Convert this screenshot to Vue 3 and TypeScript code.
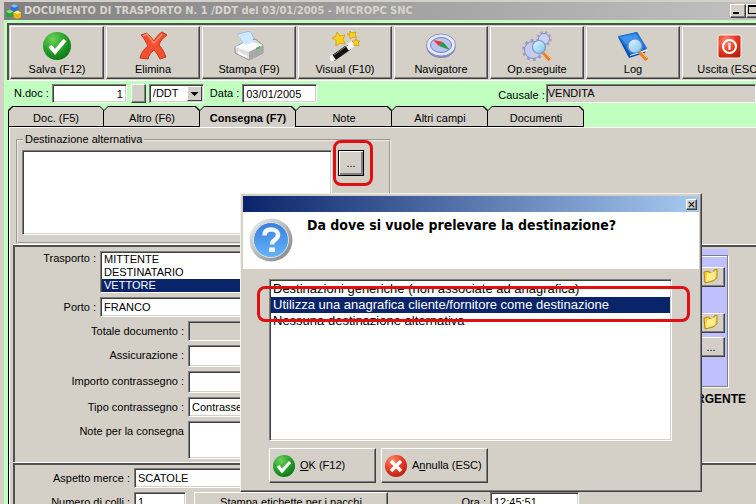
<script setup lang="ts">
import { ref } from 'vue'

interface Tool {
  icon: string
  label: string
}

const tools: Tool[] = [
  { icon: 'ok', label: 'Salva (F12)' },
  { icon: 'delete', label: 'Elimina' },
  { icon: 'print', label: 'Stampa (F9)' },
  { icon: 'wand', label: 'Visual (F10)' },
  { icon: 'compass', label: 'Navigatore' },
  { icon: 'gears', label: 'Op.eseguite' },
  { icon: 'log', label: 'Log' },
  { icon: 'exit', label: 'Uscita (ESC)' },
]

const tabs: string[] = ['Doc. (F5)', 'Altro (F6)', 'Consegna (F7)', 'Note', 'Altri campi', 'Documenti']
const activeTab = ref('Consegna (F7)')

const carriers: string[] = ['MITTENTE', 'DESTINATARIO', 'VETTORE']
const carrier = ref('VETTORE')

const sources: string[] = [
  'Destinazioni generiche (non associate ad anagrafica)',
  'Utilizza una anagrafica cliente/fornitore come destinazione',
  'Nessuna destinazione alternativa',
]
const source = ref(sources[1])

const docNumber = ref('1')
const docDate = ref('03/01/2005')
const reason = ref('VENDITA')
const port = ref('FRANCO')
const goodsLook = ref('SCATOLE')
const parcels = ref('1')
const time = ref('12:45:51')
</script>

<template>
  <div class="window">
    <!-- shared gradients -->
    <svg class="defs" aria-hidden="true">
      <defs>
        <radialGradient id="gGreen" cx="35%" cy="25%" r="80%">
          <stop offset="0" stop-color="#6fd05a" /><stop offset=".55" stop-color="#27a22b" /><stop offset="1" stop-color="#0d7418" />
        </radialGradient>
        <radialGradient id="gRed" cx="35%" cy="25%" r="80%">
          <stop offset="0" stop-color="#ff8a70" /><stop offset=".55" stop-color="#e83a22" /><stop offset="1" stop-color="#b8200f" />
        </radialGradient>
        <linearGradient id="gBlue" x1="0" y1="0" x2="0" y2="1">
          <stop offset="0" stop-color="#3a7fdc" /><stop offset="1" stop-color="#62b4fb" />
        </linearGradient>
        <linearGradient id="gSteel" x1="0" y1="0" x2="1" y2="1">
          <stop offset="0" stop-color="#f4f4f2" /><stop offset="1" stop-color="#7d7d7d" />
        </linearGradient>
        <linearGradient id="gLens" x1="0" y1="0" x2="1" y2="1">
          <stop offset="0" stop-color="#e6f7ff" /><stop offset="1" stop-color="#7cc0e8" />
        </linearGradient>
      </defs>
    </svg>

    <header class="titlebar">
      <svg class="app-icon" viewBox="0 0 16 16" aria-hidden="true">
        <path d="M5 2l4-2 4 2v5l-4 2-4-2z" fill="#2f6fd6" /><path d="M5 2l4-2 4 2-4 2z" fill="#8dbcf7" />
        <path d="M0 8l4-2 4 2v5l-4 2-4-2z" fill="#2fa33a" /><path d="M0 8l4-2 4 2-4 2z" fill="#8be07c" />
        <path d="M8 9l4-2 4 2v5l-4 2-4-2z" fill="#e8b60c" /><path d="M8 9l4-2 4 2-4 2z" fill="#ffe873" />
      </svg>
      <h1>DOCUMENTO DI TRASPORTO N. 1 /DDT del 03/01/2005 - MICROPC SNC</h1>
      <div class="caption-buttons">
        <button class="cap" aria-label="Riduci"><svg viewBox="0 0 12 10"><path d="M2 7h6v2H2z" /></svg></button>
        <button class="cap" aria-label="Ingrandisci"><svg viewBox="0 0 12 10"><path d="M1 0h9v9H1zM2 2v6h7V2z" fill-rule="evenodd" /></svg></button>
      </div>
    </header>

    <main class="client">
      <nav class="toolbar">
        <button v-for="t in tools" :key="t.label" class="tool">
          <svg v-if="t.icon === 'ok'" viewBox="0 0 30 30">
            <circle cx="15" cy="15" r="14" fill="url(#gGreen)" /><path d="M8 15l5 6 10-12" fill="none" stroke="#fff" stroke-width="4" />
          </svg>
          <svg v-else-if="t.icon === 'delete'" viewBox="0 0 30 30">
            <path d="M3 4l6-2c2 2 5 5 7 8 2-4 5-7 8-9l5 3c-4 3-7 6-8 10 3 3 5 7 7 12l-6 2c-2-4-4-7-6-9-3 2-5 5-6 9l-8-1c1-5 4-9 8-12-2-4-4-8-7-11z" fill="#f2502e" stroke="#cf3316" stroke-width="1" />
            <path d="M5 5l4-2 7 9 8-9" fill="none" stroke="#ff8c6c" stroke-width="1.5" />
          </svg>
          <svg v-else-if="t.icon === 'print'" viewBox="0 0 30 30">
            <path d="M4 3l12-3 6 11-11 4z" fill="#d6ecff" stroke="#8cb4dc" stroke-width=".8" />
            <path d="M1 16l8-4 12-4 8 6v8l-14 7-14-7z" fill="#dcdcdc" stroke="#808080" stroke-width=".8" />
            <path d="M1 16l13-6 15 4-14 7z" fill="#fafafa" /><path d="M4 4l11-3 5 10-9 3z" fill="#cfe8ff" />
            <path d="M15 21l14-7v8l-14 7z" fill="#a8a8a8" />
            <path d="M4 20l9 5v2l-9-4z" fill="#fff" /><path d="M22 17l4-2v2l-4 2z" fill="#45b84a" />
          </svg>
          <svg v-else-if="t.icon === 'wand'" viewBox="0 0 30 30">
            <path d="M2 28l17-12" stroke="#111" stroke-width="6" /><path d="M0 29l4-3M17 17l7-5" stroke="#f4f4f4" stroke-width="6" />
            <path d="M4 24l14-10" stroke="#777" stroke-width="1" />
            <path d="M7 1l3 4 5-1-2 4 2 5-5-1-4 3V9L2 7l4-2zM20 0l2 2 4-1-1 3 2 3-4-1-3 2v-3l-3-2h3zM26 8l1 2h3l-2 2 1 3-3-1-2 1v-3l-2-2h3z" fill="#ffd21f" stroke="#d49a00" stroke-width=".8" />
          </svg>
          <svg v-else-if="t.icon === 'compass'" viewBox="0 0 30 30">
            <ellipse cx="15" cy="16" rx="14.5" ry="11" fill="#8088b8" /><ellipse cx="15" cy="14" rx="14.5" ry="11" fill="#e6e8fc" stroke="#8c94c4" />
            <ellipse cx="15" cy="14" rx="10.5" ry="7.5" fill="#b9c4f0" stroke="#7580b4" />
            <path d="M7 9l10 2-4 4z" fill="#e03a34" /><path d="M24 19l-11-4 4-4z" fill="#259c4a" />
          </svg>
          <svg v-else-if="t.icon === 'gears'" viewBox="0 0 30 30">
            <circle cx="11" cy="19" r="9.5" fill="none" stroke="#9a9fd0" stroke-width="3" stroke-dasharray="3 3" />
            <circle cx="11" cy="19" r="8.5" fill="#c6caec" stroke="#8a90c4" stroke-width="1" />
            <circle cx="22" cy="8" r="6.5" fill="none" stroke="#9a9fd0" stroke-width="2.4" stroke-dasharray="2.2 2.2" />
            <circle cx="22" cy="8" r="5.5" fill="#ced2f2" stroke="#8a90c4" stroke-width="1" />
            <path d="M21 21l7 8" stroke="#f08028" stroke-width="4" /><path d="M22 20l7 8" stroke="#ffe0b0" stroke-width="1" />
            <circle cx="17" cy="16" r="6.5" fill="url(#gLens)" stroke="#6f9fc8" stroke-width="1.2" />
          </svg>
          <svg v-else-if="t.icon === 'log'" viewBox="0 0 30 30">
            <path d="M0 6l19-5 10 17-2 4-16 5z" fill="#0c4fae" /><path d="M0 5l19-4 10 16-17 6z" fill="#2274d8" />
            <path d="M2 6l16-3 4 6-14 4z" fill="#3f93ee" />
            <path d="M12 24l17-6v2l-17 5z" fill="#e8f2ff" />
            <path d="M21 20l8 9" stroke="#f08028" stroke-width="4" /><path d="M22 19l7 8" stroke="#ffe0b0" stroke-width="1" />
            <circle cx="17" cy="15" r="7" fill="url(#gLens)" stroke="#5b95cc" stroke-width="1.2" />
          </svg>
          <svg v-else viewBox="0 0 30 30">
            <rect x="4" y="4" width="23" height="23" rx="2" fill="url(#gRed)" stroke="#fff0e8" stroke-width="1" />
            <circle cx="15.500" cy="15.500" r="6.500" fill="none" stroke="#fff" stroke-width="2.200" /><path d="M15.500 12v7" stroke="#fff" stroke-width="2.200" />
          </svg>
          <span>{{ t.label }}</span>
        </button>
      </nav>

      <section class="docbar">
        <label for="ndoc">N.doc :</label>
        <input id="ndoc" v-model="docNumber" class="sunk num" />
        <button class="raised blank" aria-label="Cerca documento"></button>
        <span class="combo">
          <select class="sunk" aria-label="Serie"><option>/DDT</option></select>
          <svg class="arrow" viewBox="0 0 16 16" aria-hidden="true"><path d="M3 6h10l-5 5z" /></svg>
        </span>
        <label for="data" class="data-label">Data :</label>
        <input id="data" v-model="docDate" class="sunk date" />
        <label for="causale" class="reason-label">Causale :</label>
        <input id="causale" v-model="reason" class="sunk reason" readonly />
      </section>

      <div class="tabs" role="tablist">
        <button
          v-for="t in tabs" :key="t" class="tab" :class="{ active: t === activeTab }"
          role="tab" :aria-selected="t === activeTab" @click="activeTab = t"
        >{{ t }}</button>
      </div>

      <div class="page">
        <fieldset class="dest">
          <legend>Destinazione alternativa</legend>
          <div class="dest-body">
            <textarea class="sunk" aria-label="Destinazione alternativa"></textarea>
            <span class="marked"><button class="raised dots">...</button></span>
          </div>
        </fieldset>

        <section class="panel delivery">
          <div class="fields">
            <div class="row short top">
              <label for="trasp">Trasporto :</label>
              <select id="trasp" v-model="carrier" class="sunk list" size="3">
                <option v-for="c in carriers" :key="c">{{ c }}</option>
              </select>
            </div>
            <div class="row short"><label for="porto">Porto :</label><input id="porto" v-model="port" class="sunk" /></div>
            <div class="row"><label for="tot">Totale documento :</label><input id="tot" class="sunk gray" readonly /></div>
            <div class="row tall"><label for="assic">Assicurazione :</label><input id="assic" class="sunk" /></div>
            <div class="row tall"><label for="imp">Importo contrassegno :</label><input id="imp" class="sunk" /></div>
            <div class="row">
              <label for="tipo">Tipo contrassegno :</label>
              <select id="tipo" class="sunk"><option>Contrassegno</option></select>
            </div>
            <div class="row notes"><label for="note">Note per la consegna</label><textarea id="note" class="sunk"></textarea></div>
          </div>
          <div class="side">
            <div class="lilac">
              <div class="lilac-frame">
                <button v-for="n in 2" :key="n" class="raised folder" :aria-label="'Apri archivio ' + n">
                  <svg viewBox="0 0 16 16"><path d="M1 4l5-1 1 2 4-1V2l3-1v9l-4 3-8 2z" fill="#f7cf3c" stroke="#b58a10" /><path d="M4 6l9-3-1 8-9 3z" fill="#ffee8c" /></svg>
                </button>
                <button class="raised more">...</button>
              </div>
            </div>
            <strong>URGENTE</strong>
          </div>
        </section>

        <section class="panel goods">
          <div class="row"><label for="aspetto">Aspetto merce :</label><input id="aspetto" v-model="goodsLook" class="sunk" /></div>
          <div class="row">
            <label for="colli">Numero di colli :</label><input id="colli" v-model="parcels" class="sunk parcels" />
            <button class="raised stamp">Stampa etichette per i pacchi</button>
            <label for="ora" class="time-label">Ora :</label><input id="ora" v-model="time" class="sunk time" />
          </div>
        </section>
      </div>
    </main>

    <div class="dialog" role="dialog" aria-labelledby="question">
      <div class="dialog-caption">
        <button class="cap close" aria-label="Chiudi"><svg viewBox="0 0 8 8"><path d="M1 1l6 6M7 1L1 7" stroke="#000" stroke-width="1.2" /></svg></button>
      </div>
      <div class="dialog-head">
        <svg viewBox="0 0 44 44" aria-hidden="true">
          <circle cx="22" cy="22" r="21.5" fill="url(#gSteel)" /><circle cx="22" cy="22" r="17.5" fill="url(#gBlue)" stroke="#d9e4f0" stroke-width="1" />
          <path d="M15.500 17.500c0-4.500 3-6 6.500-6s7 2 7 5.500c0 5-6 4.500-6 9.500" fill="none" stroke="#f3f6ff" stroke-width="4.500" />
          <path d="M20 29.500h6v4.500h-6z" fill="#f3f6ff" />
        </svg>
        <h2 id="question">Da dove si vuole prelevare la destinazione?</h2>
      </div>
      <div class="dialog-body">
        <select v-model="source" class="sunk list sources" size="10" aria-labelledby="question">
          <option v-for="s in sources" :key="s">{{ s }}</option>
        </select>
        <div class="actions">
          <button class="raised act">
            <svg viewBox="0 0 22 22"><circle cx="11" cy="11" r="11" fill="url(#gGreen)" /><path d="M5 11l4 5 8-9" fill="none" stroke="#fff" stroke-width="3.200" /></svg>
            <span><u>O</u>K (F12)</span>
          </button>
          <button class="raised act">
            <svg viewBox="0 0 22 22"><circle cx="11" cy="11" r="11" fill="url(#gRed)" /><path d="M6 6l10 10M16 6L6 16" fill="none" stroke="#fff" stroke-width="3.600" /></svg>
            <span>A<u>n</u>nulla (ESC)</span>
          </button>
        </div>
      </div>
      <div class="choice-mark"></div>
    </div>
  </div>
</template>

<style>
body {
  margin: 0;
  background: #d4d0c8;
}
</style>

<style scoped>
* {
  box-sizing: border-box;
}

.window {
  position: relative;
  display: flex;
  flex-direction: column;
  height: 100vh;
  overflow: hidden;
  padding: 2px 0 0 4px;
  background: #d4d0c8;
  font: 11px/13px 'Liberation Sans', Arial, sans-serif;
  color: #000;
}

.defs {
  position: absolute;
  width: 0;
  height: 0;
}

button,
input,
select,
textarea {
  margin: 0;
  font: inherit;
  color: inherit;
  border-radius: 0;
  outline: 0;
  resize: none;
  appearance: none;
}

h1,
h2 {
  margin: 0;
  font-family: 'DejaVu Sans Condensed', 'DejaVu Sans', Tahoma, sans-serif;
  font-weight: bold;
}

.sunk {
  padding: 1px 3px;
  background: #fff;
  border: 1px solid;
  border-color: #808080 #fff #fff #808080;
  box-shadow: inset 1px 1px #404040, inset -1px -1px #d4d0c8;
}

.raised,
.cap,
.tool {
  padding: 0;
  background: #d4d0c8;
  border: 1px solid;
  border-color: #fff #404040 #404040 #fff;
  box-shadow: inset -1px -1px #808080;
}

/* title bar */
.titlebar {
  display: flex;
  align-items: center;
  flex: none;
  height: 18px;
  padding-left: 2px;
  background: linear-gradient(90deg, #808080, #c0c0c0);
}

.app-icon {
  flex: none;
  width: 15px;
  height: 15px;
  margin-right: 3px;
}

.titlebar h1 {
  flex: 1;
  min-width: 0;
  font-size: 11px;
  line-height: 16px;
  color: #d8d5ce;
  white-space: nowrap;
}

.caption-buttons {
  display: flex;
  flex: none;
  margin-right: -6px;
}

.cap {
  display: flex;
  width: 16px;
  height: 14px;
}

.cap svg {
  width: 12px;
  height: 10px;
}

/* client area */
.client {
  flex: 1;
  display: flex;
  flex-direction: column;
  padding: 3px 0 0 3px;
  background: #c0ffc0;
}

.toolbar {
  display: flex;
  gap: 2px;
  flex: none;
  height: 58px;
  padding: 3px 0 1px 3px;
  border: solid #fff;
  border-width: 0 0 1px;
  background: #d4d0c8;
  box-shadow: inset 2px 2px #505050;
}

.tool {
  display: flex;
  flex-direction: column;
  align-items: center;
  flex: none;
  width: 94px;
  padding-top: 4px;
}

.tool svg {
  width: 30px;
  height: 30px;
}

.tool span {
  line-height: 16px;
}

.docbar {
  display: flex;
  align-items: center;
  flex: none;
  height: 25px;
  padding-left: 7px;
}

.docbar .sunk {
  height: 19px;
}

.docbar label {
  white-space: nowrap;
}

.docbar .num {
  width: 75px;
  margin-left: 3px;
  text-align: right;
}

.blank {
  width: 15px;
  height: 19px;
  margin: 0 3px 0 4px;
}

.combo {
  display: flex;
  position: relative;
}

.combo select {
  width: 55px;
}

.arrow {
  position: absolute;
  right: 2px;
  top: 2px;
  width: 15px;
  height: 15px;
  background: #d4d0c8;
  border: 1px solid;
  border-color: #fff #404040 #404040 #fff;
}

.data-label {
  margin: 0 3px 0 6px;
}

.docbar .date {
  width: 75px;
}

.reason-label {
  margin: 3px 1px 0 181px;
}

.docbar .reason {
  flex: 1;
  min-width: 0;
  padding: 0 1px 1px;
  background: #d4d0c8;
}

/* tabs */
.tabs {
  display: flex;
  flex: none;
  margin-left: 1px;
}

.tab {
  position: relative;
  z-index: 0;
  width: 96px;
  height: 21px;
  padding: 3px 0 0;
  border: 0;
  background: #000;
  clip-path: polygon(0 4px, 4px 0, 92px 0, 96px 4px, 96px 100%, 0 100%);
}

.tab::before {
  content: '';
  position: absolute;
  z-index: -1;
  inset: 1px 1px 1px 0;
  background: #d4d0c8;
  clip-path: polygon(0 4px, 4px 0, 91px 0, 95px 4px, 95px 100%, 0 100%);
}

.tab:first-child::before {
  left: 1px;
}

.tab.active {
  font-weight: bold;
}

.tab.active::before {
  bottom: 0;
}

.page {
  flex: 1;
  margin-left: 1px;
  padding: 6px 0 0 4px;
  background: #d4d0c8;
  border: solid #000;
  border-width: 0 0 0 1px;
  box-shadow: inset 1px 1px #fff;
}

.dest {
  width: 375px;
  margin: 0 0 1px 3px;
  padding: 4px 4px 7px 4px;
  border: 2px groove #eceae6;
}

.dest legend {
  margin-left: 1px;
  padding: 0 2px;
}

.dest-body {
  display: flex;
  gap: 6px;
}

.dest-body textarea {
  width: 310px;
  height: 85px;
}

.marked {
  position: relative;
  height: 26px;
}

.marked::after {
  content: '';
  position: absolute;
  inset: -10px -9px -10px -5px;
  border: 3px solid #e01010;
  border-radius: 8px;
}

.dots {
  width: 26px;
  height: 26px;
  border-color: #000;
  box-shadow: inset 1px 1px #fff, inset -2px -2px #808080;
}

/* panels */
.panel {
  border: solid #505050;
  border-width: 2px 0 0 2px;
  box-shadow: 0 -1px #fff;
}

.delivery {
  display: flex;
  justify-content: space-between;
  padding: 4px 0;
}

.fields {
  display: flex;
  flex-direction: column;
  gap: 4px;
}

.row {
  display: flex;
  gap: 4px;
}

.fields .row label {
  width: 169px;
  padding-top: 4px;
  text-align: right;
  white-space: nowrap;
}

.fields .short label {
  width: 81px;
}

.fields .top label {
  padding-top: 1px;
}

.fields .row .sunk {
  width: 140px;
  height: 20px;
}

.fields .short .sunk {
  width: 228px;
}

.fields .tall .sunk {
  height: 22px;
}

.fields .notes .sunk {
  height: 38px;
}

.fields .row .gray {
  background: #d4d0c8;
}

.fields .row .list {
  height: 42px;
  padding: 1px 1px 0;
}

.list {
  overflow: hidden;
}

.list option {
  min-height: 0;
  height: 13px;
  padding: 0 2px;
  line-height: 13px;
  color: #000;
}

.list option:checked {
  background: #0a246a linear-gradient(#0a246a, #0a246a);
  color: #fff;
}

.side {
  display: flex;
  flex-direction: column;
  align-items: flex-end;
  padding-right: 10px;
}

.side strong {
  margin-top: 5px;
  font-size: 12px;
}

.lilac {
  margin: -2px 18px 0 0;
  padding: 6px 0 1px 6px;
  background: #c0c0ff;
}

.lilac-frame {
  display: flex;
  flex-direction: column;
  width: 80px;
  height: 132px;
  padding: 11px 2px 0 48px;
  border: 1px solid #808080;
  box-shadow: 1px 1px #fff, inset 1px 1px #fff;
}

.lilac-frame .raised {
  flex: none;
  height: 20px;
}

.folder svg {
  width: 16px;
  height: 16px;
}

.folder + .folder {
  margin: 26px 0 4px;
}

.goods {
  display: flex;
  flex-direction: column;
  gap: 4px;
  padding-top: 3px;
}

.goods label {
  width: 115px;
  padding-top: 4px;
  text-align: right;
  white-space: nowrap;
}

.goods .sunk {
  width: 240px;
  height: 20px;
}

.goods .parcels {
  width: 52px;
}

.stamp {
  width: 194px;
  height: 22px;
  margin-left: 4px;
  padding-bottom: 2px;
}

.goods .time-label {
  width: 94px;
}

.goods .time {
  width: 89px;
}

/* dialog */
.dialog {
  position: absolute;
  left: 240px;
  top: 193px;
  width: 462px;
  padding: 2px;
  background: #d4d0c8;
  border: 1px solid;
  border-color: #f4f2ee #404040 #404040 #f4f2ee;
  box-shadow: inset -1px -1px #808080;
}

.dialog-caption {
  display: flex;
  align-items: center;
  justify-content: flex-end;
  height: 16px;
  padding-right: 2px;
  background: linear-gradient(90deg, #0a246a, #a6caf0);
}

.close {
  width: 11px;
  height: 11px;
  align-items: center;
  justify-content: center;
}

.close svg {
  width: 7px;
  height: 7px;
}

.dialog-head {
  display: flex;
  gap: 14px;
  height: 57px;
  padding: 6px;
  background: #fff;
}

.dialog-head svg {
  flex: none;
  width: 44px;
  height: 44px;
}

.dialog-head h2 {
  font-size: 14px;
  line-height: 14px;
  white-space: nowrap;
}

.dialog-body {
  display: flex;
  flex-direction: column;
  gap: 7px;
  padding: 10px 27px 6px 26px;
}

.sources {
  height: 162px;
  padding: 1px;
  font-size: 13px;
}

.sources option {
  height: 16px;
  line-height: 16px;
}

.actions {
  display: flex;
  gap: 5px;
}

.act {
  display: flex;
  align-items: center;
  gap: 5px;
  width: 107px;
  height: 35px;
  padding-left: 3px;
}

.act svg {
  width: 22px;
  height: 22px;
}

.choice-mark {
  position: absolute;
  left: 16px;
  top: 92px;
  width: 433px;
  height: 36px;
  border: 3px solid #e01010;
  border-radius: 8px;
  pointer-events: none;
}
</style>
